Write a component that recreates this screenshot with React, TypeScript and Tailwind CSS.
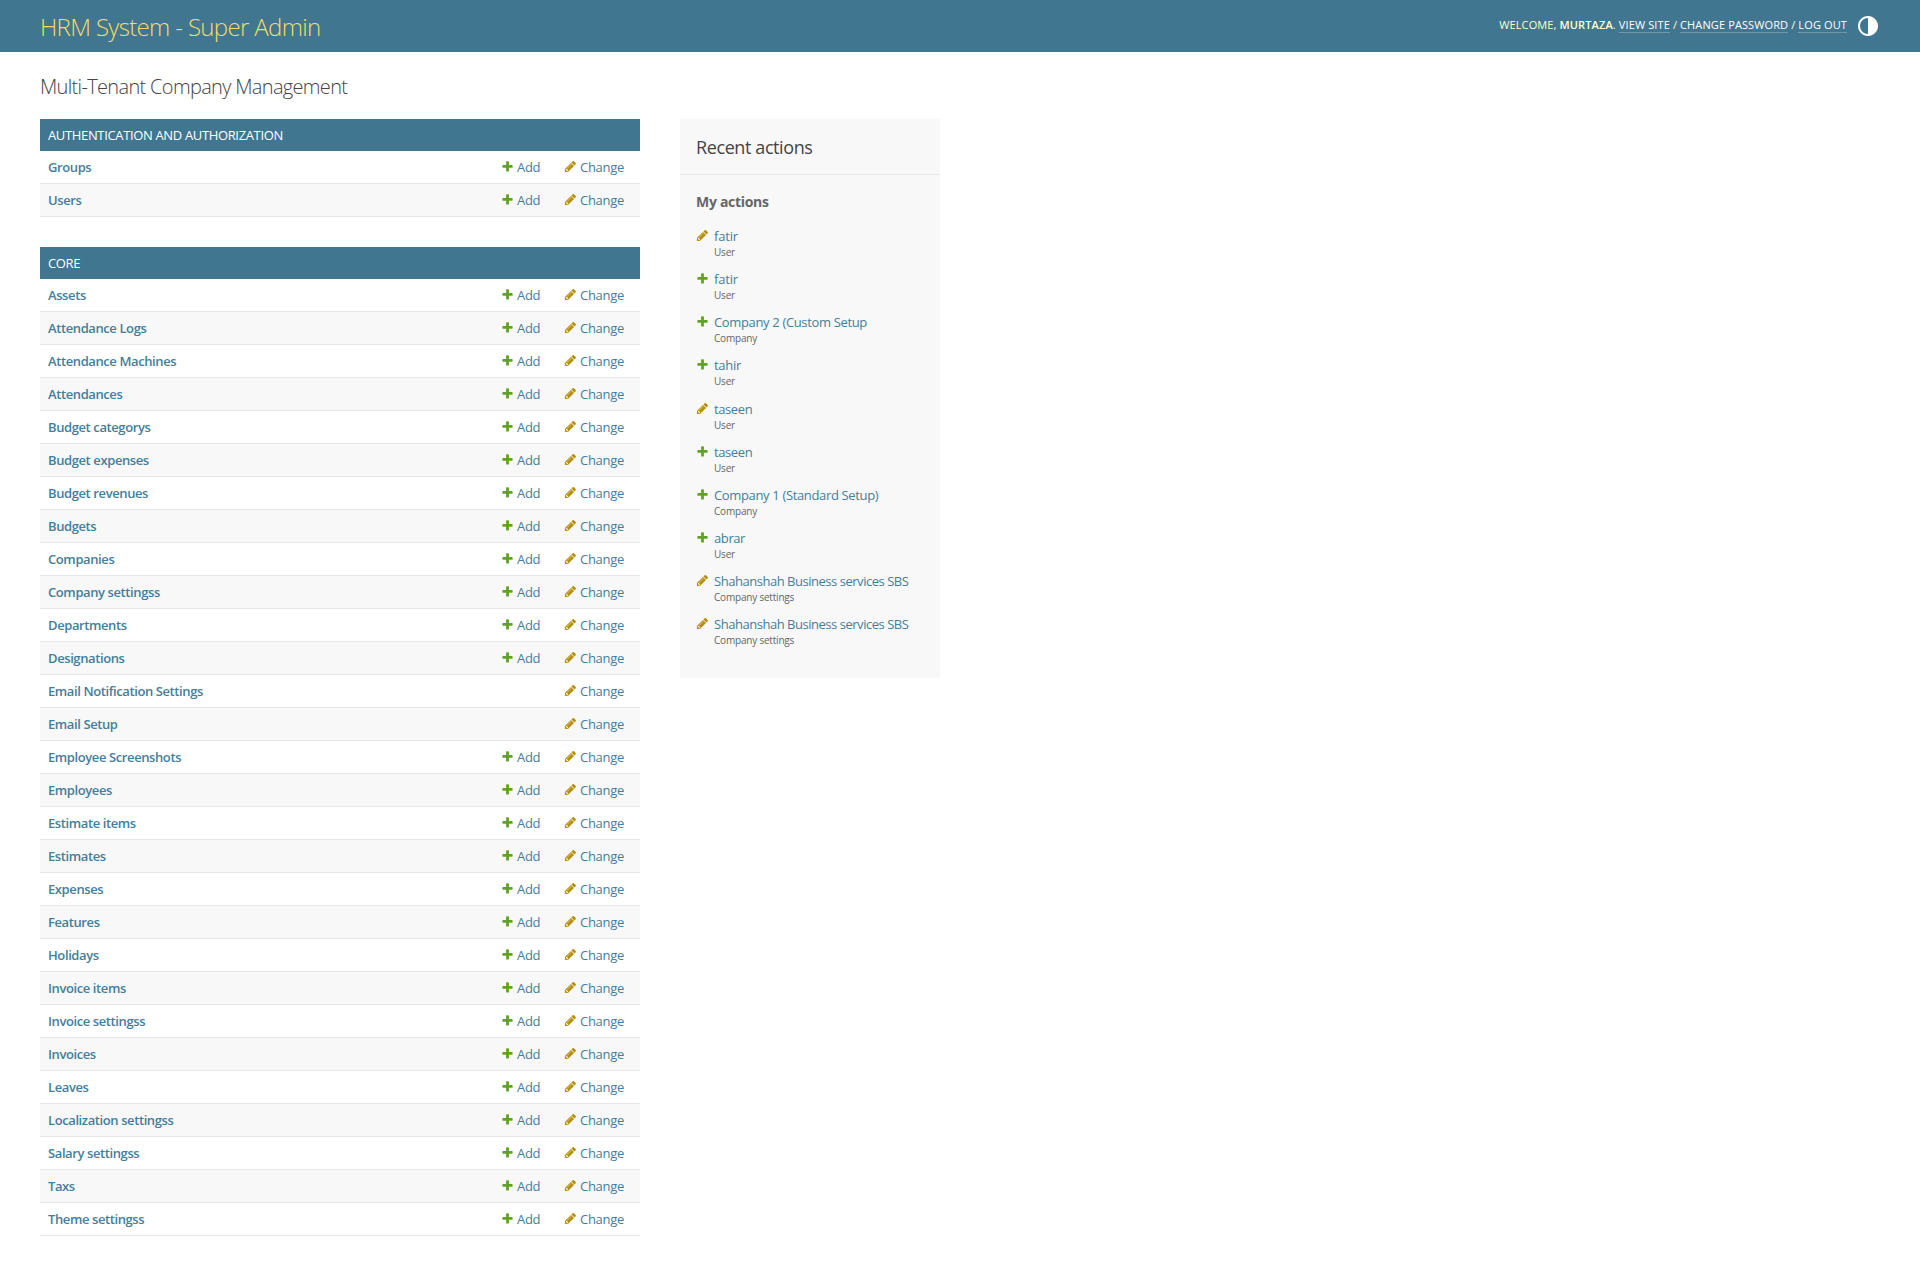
/**
 * Django admin index - HRM System
 */
const FONT = "font-['Open_Sans','Noto_Sans',sans-serif]"

const ADD = 'M1600 796v192q0 40-28 68t-68 28h-416v416q0 40-28 68t-68 28h-192q-40 0-68-28t-28-68v-416h-416q-40 0-68-28t-28-68v-192q0-40 28-68t68-28h416v-416q0-40 28-68t68-28h192q40 0 68 28t28 68v416h416q40 0 68 28t28 68z'
const CHANGE = 'M491 1536l91-91-235-235-91 91v107h128v128h107zm523-928q0-22-22-22-10 0-17 7l-542 542q-7 7-7 17 0 22 22 22 10 0 17-7l542-542q7-7 7-17zm-54-192l416 416-832 832h-416v-416zm683 96q0 53-37 90l-166 166-416-416 166-165q36-38 90-38 53 0 91 38l235 234q37 39 37 91z'

function AddIcon({ className = '' }: { className?: string }) {
  return (
    <svg width="13" height="13" viewBox="0 0 1792 1792" className={`shrink-0 ${className}`}>
      <path fill="#5fa225" d={ADD} />
    </svg>
  )
}

function ChangeIcon({ className = '' }: { className?: string }) {
  return (
    <svg width="13" height="13" viewBox="0 0 1792 1792" className={`shrink-0 ${className}`}>
      <path fill="#b78e0c" d={CHANGE} />
    </svg>
  )
}

const authRows = ['Groups', 'Users']

const coreRows = [
  'Assets', 'Attendance Logs', 'Attendance Machines', 'Attendances', 'Budget categorys',
  'Budget expenses', 'Budget revenues', 'Budgets', 'Companies', 'Company settingss',
  'Departments', 'Designations', 'Email Notification Settings', 'Email Setup',
  'Employee Screenshots', 'Employees', 'Estimate items', 'Estimates', 'Expenses', 'Features',
  'Holidays', 'Invoice items', 'Invoice settingss', 'Invoices', 'Leaves',
  'Localization settingss', 'Salary settingss', 'Taxs', 'Theme settingss',
]

const noAdd = ['Email Notification Settings', 'Email Setup']

const actions = [
  { name: 'fatir', kind: 'User', icon: 'change', track: 'tracking-[-0.2px]' },
  { name: 'fatir', kind: 'User', icon: 'add', track: 'tracking-[-0.2px]' },
  { name: 'Company 2 (Custom Setup', kind: 'Company', icon: 'add', track: 'tracking-[-0.35px]' },
  { name: 'tahir', kind: 'User', icon: 'add', track: 'tracking-[-0.3px]' },
  { name: 'taseen', kind: 'User', icon: 'change', track: 'tracking-[-0.4px]' },
  { name: 'taseen', kind: 'User', icon: 'add', track: 'tracking-[-0.4px]' },
  { name: 'Company 1 (Standard Setup)', kind: 'Company', icon: 'add', track: 'tracking-[-0.35px]' },
  { name: 'abrar', kind: 'User', icon: 'add', track: 'tracking-[-0.4px]' },
  { name: 'Shahanshah Business services SBS', kind: 'Company settings', icon: 'change', track: 'tracking-[-0.47px]' },
  { name: 'Shahanshah Business services SBS', kind: 'Company settings', icon: 'change', track: 'tracking-[-0.47px]' },
]

function Module({ title, rows }: { title: string; rows: string[] }) {
  return (
    <div className="mb-[30px]">
      <div className="h-8 bg-[#417690] pl-2 text-[13px] leading-8 tracking-[-0.35px] text-white uppercase">
        {title}
      </div>
      {rows.map((row, i) => (
        <div
          key={row}
          className={`flex h-[33px] items-center border-b border-[#e8e8e8] pt-px text-[13px] ${i % 2 ? 'bg-[#f8f8f8]' : 'bg-white'}`}
        >
          <a className="flex-1 pl-2 font-semibold tracking-[-0.4px] text-[#447e9b]">{row}</a>
          <div className="w-[62px]">
            {!noAdd.includes(row) && (
              <a className="-ml-px flex items-center gap-[3px] tracking-[-0.3px] text-[#447e9b]">
                <AddIcon className="mb-[3px]" />
                Add
              </a>
            )}
          </div>
          <a className="flex w-[76px] items-center gap-[3px] tracking-[-0.3px] text-[#447e9b]">
            <ChangeIcon className="mb-[3px]" />
            Change
          </a>
        </div>
      ))}
    </div>
  )
}

export default function App() {
  return (
    <div className={`min-h-[1286px] bg-white ${FONT}`}>
      <header className="flex h-[52px] items-center justify-between bg-[#417690] px-10">
        <div className="pt-0.5 text-2xl font-light tracking-[-0.65px] text-[#f5dd5d]">HRM System - Super Admin</div>
        <div className="flex items-center text-[11px] tracking-[0.12px] text-[#ffc] uppercase">
          <span className="pb-0.5">
            Welcome, <strong className="font-semibold">Murtaza</strong>.{' '}
            <a className="border-b border-white/25 text-white">View site</a> /{' '}
            <a className="border-b border-white/25 text-white">Change password</a> /{' '}
            <a className="border-b border-white/25 text-white">Log out</a>
          </span>
          <svg width="24" height="24" viewBox="0 0 24 24" className="ml-[9px] fill-white">
            <path d="M12 22C6.477 22 2 17.523 2 12S6.477 2 12 2s10 4.477 10 10-4.477 10-10 10zm0-2V4a8 8 0 1 0 0 16z" />
          </svg>
        </div>
      </header>

      <main className="px-10 pt-5">
        <h1 className="mb-[17px] text-[20px] leading-[30px] font-light tracking-[-0.67px] text-[#444]">
          Multi-Tenant Company Management
        </h1>
        <div className="flex items-start gap-10">
          <div className="w-[600px]">
            <Module title="Authentication and Authorization" rows={authRows} />
            <Module title="Core" rows={coreRows} />
          </div>
          <aside className="h-[559px] w-[260px] bg-[#f8f8f8]">
            <h2 className="border-b border-[#e8e8e8] px-4 pt-4 pb-[15px] text-[18px] leading-6 tracking-[-0.4px] text-[#444]">
              Recent actions
            </h2>
            <h3 className="mt-[17px] mb-[15px] px-4 text-sm font-bold tracking-[-0.3px] text-[#666]">My actions</h3>
            <ul className="px-4">
              {actions.map((a, i) => (
                <li key={i} className="flex h-[43.15px] gap-[5px]">
                  <span className="pt-[2px]">{a.icon === 'add' ? <AddIcon /> : <ChangeIcon />}</span>
                  <span className="flex flex-col">
                    <a className={`text-[13px] leading-[18px] text-[#447e9b] ${a.track}`}>{a.name}</a>
                    <span className="text-[10px] leading-[15px] tracking-[-0.2px] text-[#666]">{a.kind}</span>
                  </span>
                </li>
              ))}
            </ul>
          </aside>
        </div>
      </main>
    </div>
  )
}
